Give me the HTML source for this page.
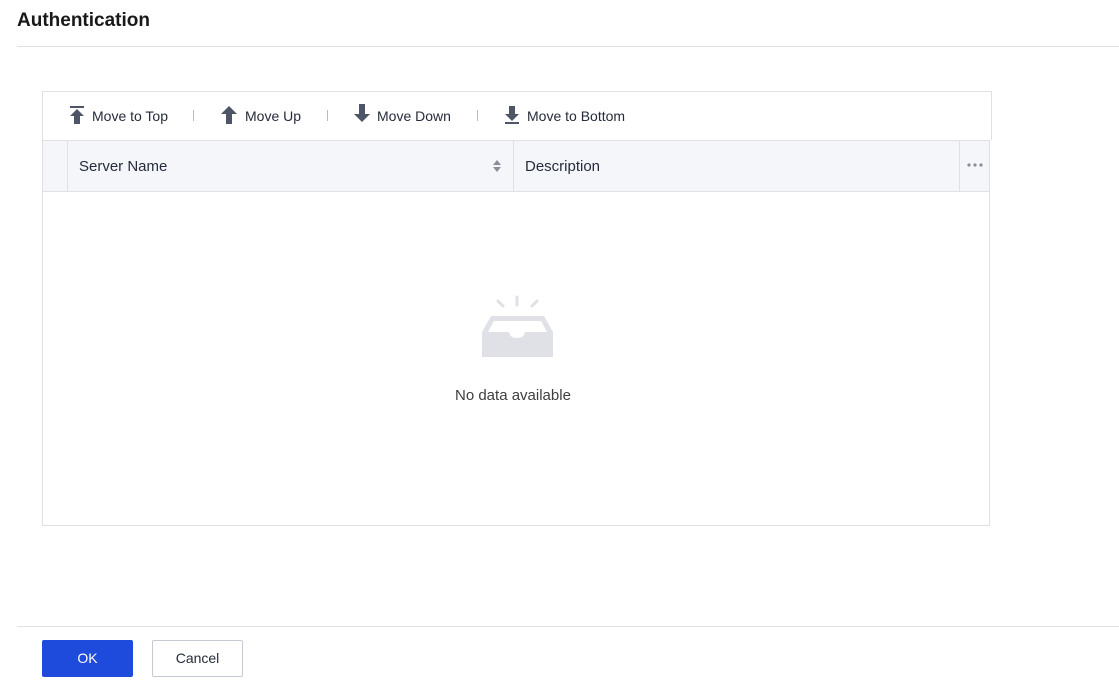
<!DOCTYPE html>
<html><head><style>
body{margin:0;width:1119px;height:700px;background:#fff;font-family:"Liberation Sans",Arial,sans-serif;position:relative;overflow:hidden}
.a{position:absolute}
.t{font-size:14px;color:#252b3a}
</style></head><body>
<div class="a" style="left:17px;top:10px;font-size:19px;font-weight:bold;color:#191919">Authentication</div>
<div class="a" style="left:17px;top:46px;width:1102px;height:1px;background:#dfe1e6"></div>

<div class="a" style="left:42px;top:91px;width:948px;height:48px;border:1px solid #dfe1e6;border-bottom:none"></div>
<svg class="a" style="left:68px;top:106px" width="18" height="18" viewBox="0 0 18 18"><rect x="2" y="0" width="14" height="2" fill="#4e5566"/><path d="M9 3 L16 10 H12 V18 H6 V10 H2Z" fill="#4e5566"/></svg>
<div class="a t" style="left:92px;top:108px">Move to Top</div>
<div class="a" style="left:193px;top:110px;width:1px;height:11px;background:#bbb"></div>
<svg class="a" style="left:221px;top:106px" width="16" height="18" viewBox="0 0 16 18"><path d="M8 0 L16 8 H11 V18 H5 V8 H0Z" fill="#4e5566"/></svg>
<div class="a t" style="left:245px;top:108px">Move Up</div>
<div class="a" style="left:327px;top:110px;width:1px;height:11px;background:#bbb"></div>
<svg class="a" style="left:354px;top:104px" width="16" height="18" viewBox="0 0 16 18"><path d="M8 18 L16 10 H11 V0 H5 V10 H0Z" fill="#4e5566"/></svg>
<div class="a t" style="left:377px;top:108px">Move Down</div>
<div class="a" style="left:477px;top:110px;width:1px;height:11px;background:#bbb"></div>
<svg class="a" style="left:503px;top:106px" width="18" height="18" viewBox="0 0 18 18"><path d="M9 15 L16 8 H12 V0 H6 V8 H2Z" fill="#4e5566"/><rect x="2" y="16" width="14" height="2" fill="#4e5566"/></svg>
<div class="a t" style="left:527px;top:108px">Move to Bottom</div>

<div class="a" style="left:42px;top:140px;width:946px;height:384px;border:1px solid #dfe1e6"></div>
<div class="a" style="left:43px;top:141px;width:946px;height:50px;background:#f4f6fa;border-bottom:1px solid #dfe1e6"></div>
<div class="a" style="left:67px;top:141px;width:1px;height:50px;background:#dfe1e6"></div>
<div class="a" style="left:513px;top:141px;width:1px;height:50px;background:#dfe1e6"></div>
<div class="a" style="left:959px;top:141px;width:1px;height:50px;background:#dfe1e6"></div>
<div class="a" style="left:79px;top:158px;font-size:15px;color:#252b3a">Server Name</div>
<svg class="a" style="left:493px;top:160px" width="8" height="12" viewBox="0 0 8 12"><path d="M4 0L8 5H0Z M4 12L8 7H0Z" fill="#8a8e99"/></svg>
<div class="a" style="left:525px;top:158px;font-size:15px;color:#252b3a">Description</div>
<svg class="a" style="left:967px;top:163px" width="18" height="4" viewBox="0 0 18 4"><circle cx="2" cy="2" r="1.6" fill="#8a8e99"/><circle cx="8" cy="2" r="1.6" fill="#8a8e99"/><circle cx="14" cy="2" r="1.6" fill="#8a8e99"/></svg>

<svg class="a" style="left:480px;top:294px" width="76" height="66" viewBox="0 0 76 66">
<g stroke="#dfe1e6" stroke-width="3" stroke-linecap="round"><line x1="37" y1="3" x2="37" y2="11"/><line x1="18" y1="7" x2="23" y2="12"/><line x1="57" y1="7" x2="52" y2="12"/></g>
<path d="M11 22 H64 L73 38 V63 H2 V38Z" fill="#dfe1e6"/>
<path d="M14 27 H61 L67 38 H45 Q44 44 37 44 Q30 44 29 38 H8Z" fill="#fff"/>
</svg>
<div class="a" style="left:455px;top:387px;font-size:15px;color:#3e3e3e">No data available</div>

<div class="a" style="left:17px;top:626px;width:1102px;height:1px;background:#dfe1e6"></div>
<div class="a" style="left:42px;top:640px;width:91px;height:37px;background:#1f4bdd;border-radius:2px;color:#fff;font-size:14px;text-align:center;line-height:37px">OK</div>
<div class="a" style="left:152px;top:640px;width:89px;height:35px;border:1px solid #c6cad2;border-radius:2px;color:#252b3a;font-size:14px;text-align:center;line-height:35px">Cancel</div>
</body></html>
